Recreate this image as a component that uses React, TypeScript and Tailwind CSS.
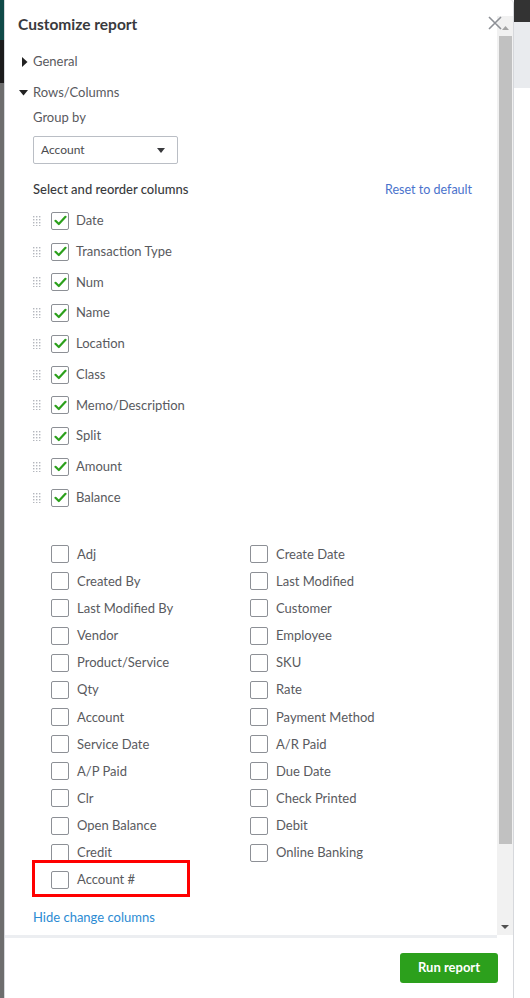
import React from "react";

const checkedCols = [
  "Date",
  "Transaction Type",
  "Num",
  "Name",
  "Location",
  "Class",
  "Memo/Description",
  "Split",
  "Amount",
  "Balance",
];

const moreCols: [string, string | null][] = [
  ["Adj", "Create Date"],
  ["Created By", "Last Modified"],
  ["Last Modified By", "Customer"],
  ["Vendor", "Employee"],
  ["Product/Service", "SKU"],
  ["Qty", "Rate"],
  ["Account", "Payment Method"],
  ["Service Date", "A/R Paid"],
  ["A/P Paid", "Due Date"],
  ["Clr", "Check Printed"],
  ["Open Balance", "Debit"],
  ["Credit", "Online Banking"],
  ["Account #", null],
];

const font = { fontFamily: "Lato, 'Noto Sans', sans-serif" };

function DragHandle() {
  return (
    <svg width="8" height="10" viewBox="0 0 8 10" className="shrink-0">
      {[0, 1, 2].map((c) =>
        [0, 1, 2, 3].map((r) => (
          <rect key={`${c}-${r}`} x={c * 3} y={r * 3} width="1.4" height="1.4" fill="#b4b7bd" />
        ))
      )}
    </svg>
  );
}

function Box({ checked }: { checked?: boolean }) {
  return (
    <div className="w-[18px] h-[18px] shrink-0 rounded-[2px] border border-[#8d9096] bg-white flex items-center justify-center">
      {checked && (
        <svg width="13" height="11" viewBox="0 0 13 11">
          <path d="M1.5 5.8 L4.8 9 L11.5 1.8" fill="none" stroke="#2ca01c" strokeWidth="2.2" strokeLinecap="round" strokeLinejoin="round" />
        </svg>
      )}
    </div>
  );
}

function Option({ label }: { label: string }) {
  return (
    <div className="flex items-center gap-[8px] h-[27.17px]">
      <Box />
      <span className="text-[13px] text-[#595a5e] leading-none">{label}</span>
    </div>
  );
}

export default function App() {
  return (
    <div className="w-[530px] h-[998px] flex bg-white overflow-hidden" style={font}>
      {/* page behind the panel, left edge */}
      <div className="w-[4px] h-full flex flex-col shrink-0">
        <div className="h-[40px] bg-[#0f4a47]" />
        <div className="h-[43px] bg-[#1b1b1b]" />
        <div className="flex-1 bg-[#6d6d6d]" />
      </div>

      {/* report customizer panel */}
      <div className="relative w-[510px] h-full shrink-0 flex flex-col bg-white border-l border-r border-[#d6d8dc] rounded-tr-[4px]">
        <div className="flex-1 flex min-h-0">
          <div className="flex-1 pl-[13px] pr-[25px] text-[#393a3d]">
            <div className="mt-[15px] h-[20px] flex items-center text-[15.5px] font-bold text-[#393a3d]">
              Customize report
            </div>

            <div className="mt-[17px] h-[20px] flex items-center">
              <svg width="6" height="10" viewBox="0 0 6 10" className="ml-[4px] mr-[5px]">
                <path d="M0 0 L5.5 5 L0 10 Z" fill="#222" />
              </svg>
              <span className="text-[13px] text-[#595a5e]">General</span>
            </div>

            <div className="mt-[11px] h-[20px] flex items-center">
              <svg width="9" height="6" viewBox="0 0 9 6" className="ml-[1px] mr-[5px]">
                <path d="M0 0 L9 0 L4.5 5.5 Z" fill="#222" />
              </svg>
              <span className="text-[13px] text-[#595a5e]">Rows/Columns</span>
            </div>

            <div className="pl-[15px]">
              <div className="mt-[5px] h-[20px] flex items-center text-[13px] text-[#595a5e]">Group by</div>

              <div className="mt-[8px] w-[145px] h-[28px] rounded-[2px] border border-[#babec5] flex items-center justify-between pl-[7px] pr-[12px]">
                <span className="text-[12px] text-[#4a4b4e]">Account</span>
                <svg width="8" height="5" viewBox="0 0 8 5">
                  <path d="M0 0 L8 0 L4 5 Z" fill="#393a3d" />
                </svg>
              </div>

              <div className="mt-[16px] h-[20px] flex items-center justify-between">
                <span className="text-[13px] font-medium text-[#393a3d]">Select and reorder columns</span>
                <span className="text-[12.5px] text-[#4a72cc]">Reset to default</span>
              </div>

              <div className="mt-[5.5px] flex flex-col">
                {checkedCols.map((c) => (
                  <div key={c} className="h-[30.75px] flex items-center">
                    <DragHandle />
                    <div className="ml-[10px]">
                      <Box checked />
                    </div>
                    <span className="ml-[7px] text-[13px] text-[#595a5e]">{c}</span>
                  </div>
                ))}
              </div>

              <div className="mt-[27.5px] pl-[18px] grid grid-cols-[199px_1fr]">
                {moreCols.map(([a, b]) => (
                  <React.Fragment key={a}>
                    {a === "Account #" ? (
                      <div className="relative">
                        <Option label={a} />
                        <div className="absolute left-[-19px] top-[-6px] w-[158px] h-[37px] border-[3px] border-[#ff0000]" />
                      </div>
                    ) : (
                      <Option label={a} />
                    )}
                    {b ? <Option label={b} /> : <div />}
                  </React.Fragment>
                ))}
              </div>

              <div className="mt-[14px] h-[20px] flex items-center text-[13px] text-[#2b8bd3]">Hide change columns</div>
            </div>
          </div>

          {/* scrollbar */}
          <div className="w-[16px] mt-[16px] bg-[#f1f1f1] flex flex-col items-center">
            <div className="h-[20px] w-full flex items-end justify-center pb-[6px]">
              <svg width="7" height="4" viewBox="0 0 7 4">
                <path d="M0 4 L7 4 L3.5 0 Z" fill="#a3a3a3" />
              </svg>
            </div>
            <div className="w-[13px] h-[808px] bg-[#c1c1c1]" />
            <div className="flex-1" />
            <div className="h-[16px] w-full flex items-center justify-center">
              <svg width="8" height="4" viewBox="0 0 8 4">
                <path d="M0 0 L8 0 L4 4 Z" fill="#505050" />
              </svg>
            </div>
          </div>
        </div>

        {/* close button */}
        <svg width="14" height="14" viewBox="0 0 14 14" className="absolute left-[483px] top-[16px]">
          <path d="M1 1 L13 13 M13 1 L1 13" stroke="#8d9096" strokeWidth="1.6" />
        </svg>

        <div className="h-[3px] bg-[#eceef1] mr-[16px]" />
        <div className="h-[60px] flex items-start justify-end pt-[15px] pr-[15px]">
          <button className="w-[98px] h-[30px] rounded-[3px] bg-[#2ca01c] text-white text-[13px] font-bold">
            Run report
          </button>
        </div>
      </div>

      {/* page behind the panel, right edge */}
      <div className="flex-1 h-full flex flex-col">
        <div className="h-[22px] bg-[#333333]" />
        <div className="h-[66px] bg-[#e9ebee]" />
        <div className="flex-1 bg-white" />
      </div>
    </div>
  );
}
